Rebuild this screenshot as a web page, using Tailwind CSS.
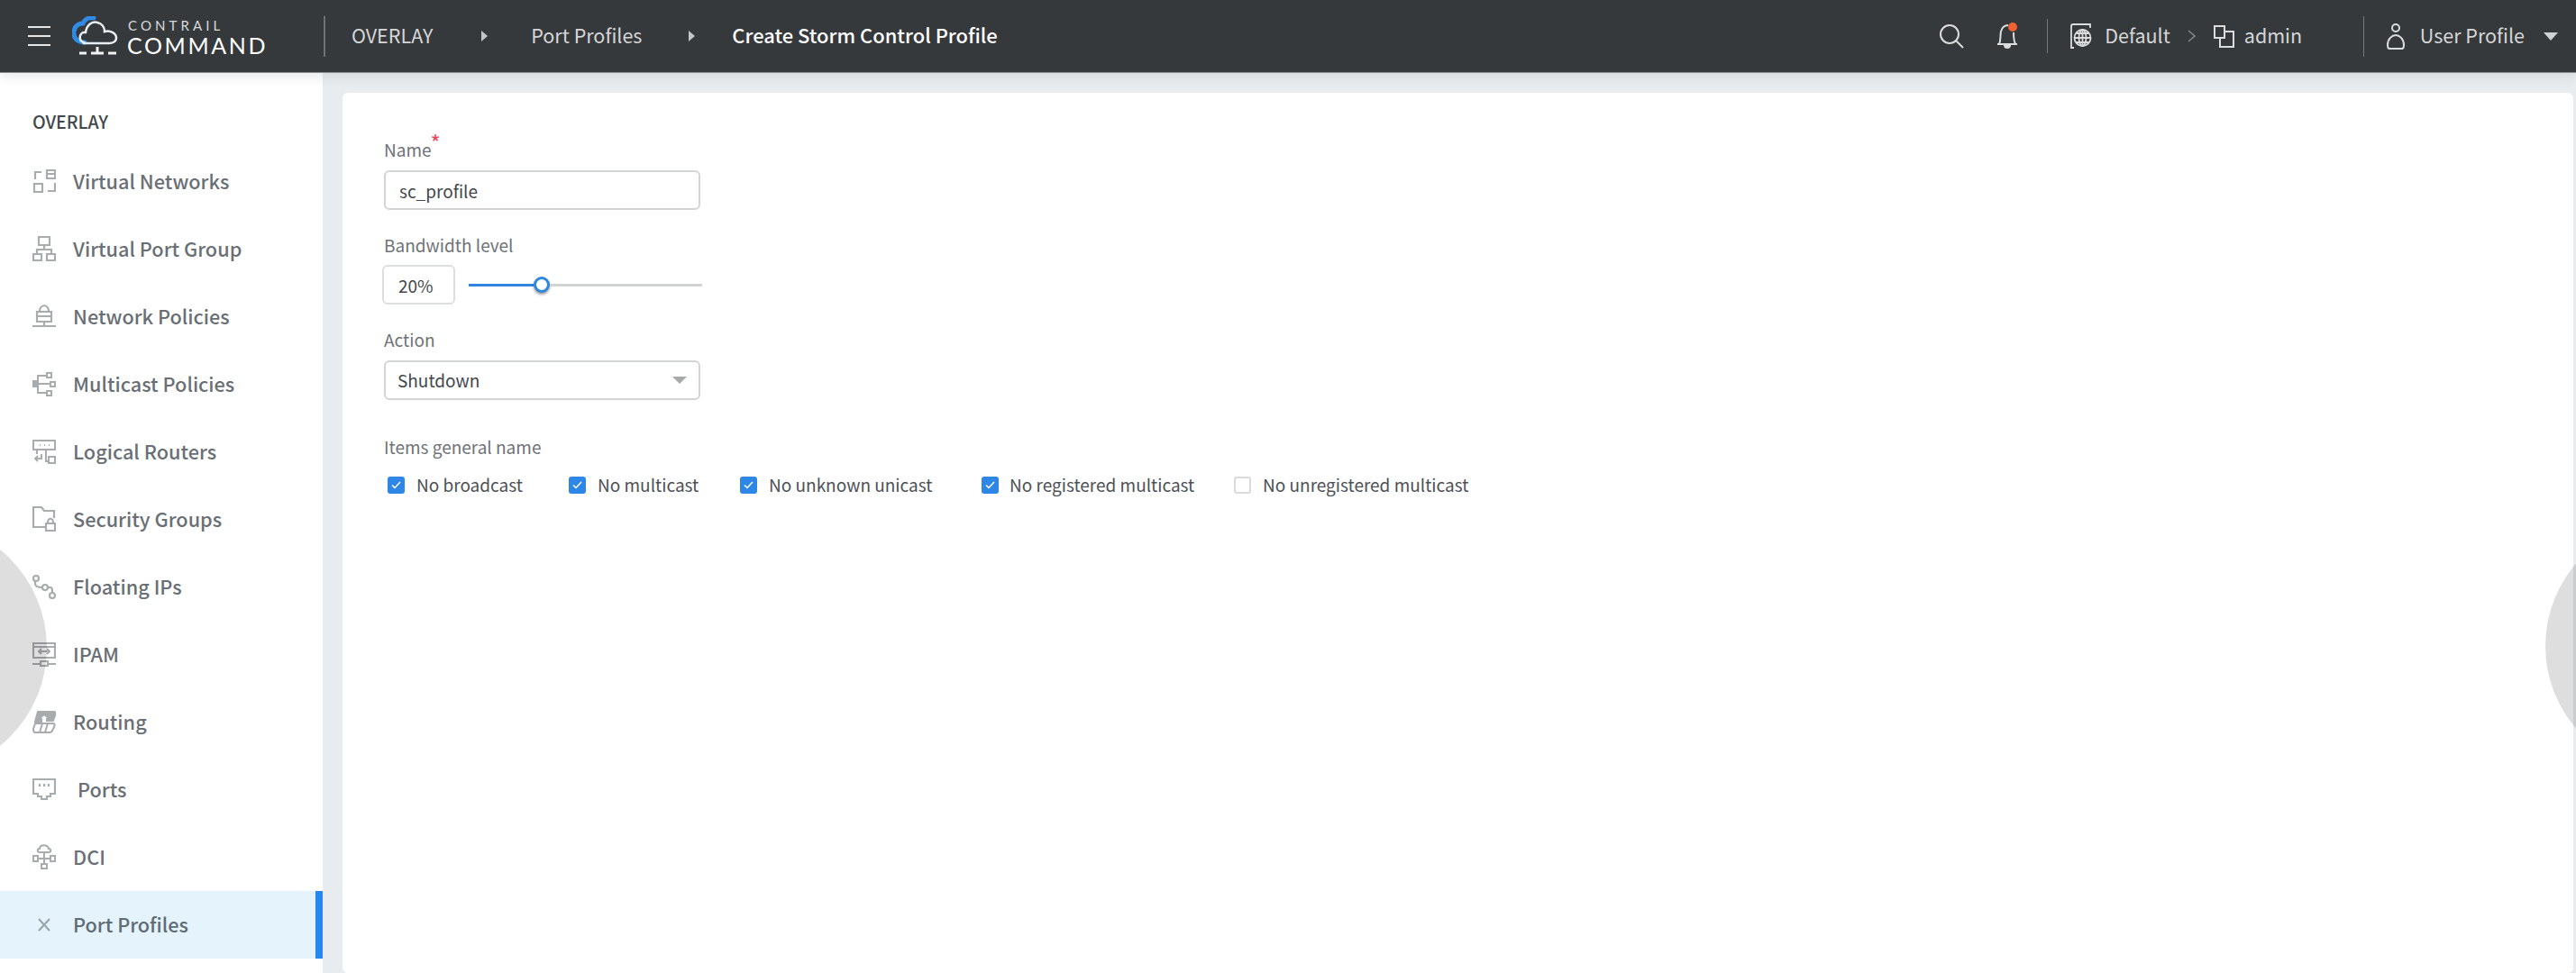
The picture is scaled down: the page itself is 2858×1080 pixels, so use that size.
<!DOCTYPE html>
<html lang="en">
<head>
  <meta charset="UTF-8">
  <title>Create Storm Control Profile</title>
  <script src="https://cdn.jsdelivr.net/npm/@tailwindcss/browser@4"></script>
</head>
<body class="bg-[#e9ecef] font-['Noto_Sans_CJK_JP','Noto_Sans',sans-serif]">
  <div class="relative w-full h-[1080px] overflow-hidden flex flex-col">

    <!-- top bar -->
    <header class="relative z-10 h-[81px] shrink-0 bg-[#36393c] border-b border-[#8b8e91] shadow-[0_3px_14px_rgba(0,0,0,0.10)] flex items-center text-[#d5d6d7] text-[21.500px]">
      <div class="ml-[31px] w-[25px] flex flex-col gap-[8px]">
        <span class="h-[2px] bg-[#e6e6e6]"></span>
        <span class="h-[2px] bg-[#e6e6e6]"></span>
        <span class="h-[2px] bg-[#e6e6e6]"></span>
      </div>
      <svg class="ml-[24px]" width="52" height="44" viewBox="0 0 52 44" fill="none">
        <path d="M14 29C6 29 1 24 2 17C3 10 8 8 12 8C14 3 19 1 24 2" stroke="#2f8be6" stroke-width="5" stroke-linecap="round"/>
        <path d="M14 30C9 29 8 22 13 19C14 19 15 19 16 19C17 11 23 6 29 8C34 9 37 13 37 18C43 16 50 20 50 25C50 29 46 31 42 31H14Z" stroke="#e9eef3" stroke-width="2.5" transform="translate(-1 -1)"/>
        <path d="M8 41H16M21 41H35M40 41H49M28 34V41" stroke="#f2f2f2" stroke-width="3"/>
      </svg>
      <div class="ml-[9px] w-[158px] flex flex-col font-['Lato',sans-serif] text-white">
        <span class="text-[15px] leading-[19px] tracking-[4.1px] pl-[1px] text-[#d8d9da]">CONTRAIL</span>
        <span class="text-[25px] leading-[24px] tracking-[2.600px] whitespace-nowrap">COMMAND</span>
      </div>
      <span class="ml-[60px] w-[2px] h-[45px] bg-[#6f7275]"></span>
      <span class="ml-[29px] pb-[2px]">OVERLAY</span>
      <span class="ml-[54px] border-y-[6px] border-l-[7px] border-y-transparent border-l-[#c4c5c6]"></span>
      <span class="ml-[48px] pb-[2px]">Port Profiles</span>
      <span class="ml-[52px] border-y-[6px] border-l-[7px] border-y-transparent border-l-[#c4c5c6]"></span>
      <span class="ml-[41px] pb-[2px] text-[21.900px] font-medium text-white">Create Storm Control Profile</span>

      <div class="ml-auto flex items-center">
        <svg width="28" height="28" viewBox="0 0 28 28" fill="none" stroke="#dcdcdc" stroke-width="2"><circle cx="12" cy="12" r="10"/><path d="M19 19L27 27"/></svg>
        <svg class="ml-[35px]" width="26" height="30" viewBox="0 0 26 30" fill="none" stroke="#dcdcdc" stroke-width="2"><path d="M4 24C6 20 5 14 6 10C7 6 10 3 14 3"/><path d="M20 11C20 16 20 20 22 24M2 24H24"/><path d="M10 25C10 29 16 29 16 25" fill="#dcdcdc"/></svg>
        <span class="ml-[31px] w-[1px] h-[38px] bg-[#75787b]"></span>
        <svg class="ml-[24px]" width="25" height="30" viewBox="0 0 25 30" fill="none" stroke="#dcdcdc" stroke-width="1.800"><path d="M5 28H2V4C2 2 3 2 4 2H23V6"/><circle cx="14.500" cy="17" r="9"/><path d="M5.500 17H23.500M14.500 8V26M8 12H21M8 22H21"/><ellipse cx="14.500" cy="17" rx="4" ry="9"/></svg>
        <span class="ml-[14px] pb-[2px]">Default</span>
        <svg class="ml-[19px]" width="9" height="14" viewBox="0 0 9 14" fill="none" stroke="#85888a" stroke-width="1.500"><path d="M1 1L8 7L1 13"/></svg>
        <svg class="ml-[19px]" width="25" height="26" viewBox="0 0 25 26" fill="none" stroke="#dcdcdc" stroke-width="2"><path d="M2 2H13V15H2Z"/><path d="M13 8H23V25H8V15"/></svg>
        <span class="ml-[10px] pb-[2px] w-[132px]">admin</span>
        <span class="w-[1px] h-[45px] bg-[#75787b]"></span>
        <svg class="ml-[25px]" width="20" height="31" viewBox="0 0 20 31" fill="none" stroke="#dcdcdc" stroke-width="2"><circle cx="10" cy="6" r="4"/><path d="M3 29C1 29 1 27 1 25C1 18 6 14 10 14C14 14 19 18 19 25C19 27 19 29 17 29Z"/></svg>
        <span class="ml-[17px] pb-[2px]">User Profile</span>
        <span class="ml-[21px] mr-[20px] border-x-[8px] border-t-[9px] border-x-transparent border-t-[#d0d1d2]"></span>
      </div>
      <!-- unread dot on the bell -->
      <span class="absolute left-[2228px] top-[25px] w-[10px] h-[10px] rounded-full bg-[#f0622f]"></span>
    </header>

    <div class="flex flex-1 min-h-0">
      <!-- sidebar -->
      <aside class="w-[358px] shrink-0 bg-white text-[21.700px] font-medium text-[#6a6f75]">
        <div class="h-[83px] pl-[36px] pt-[40px] text-[19.500px] leading-[28px] text-[#43474b]">OVERLAY</div>

        <a class="h-[75px] flex items-center pl-[36px] pb-[1px]">
          <svg class="shrink-0" width="26" height="26" viewBox="0 0 26 26" fill="none" stroke="#a9acaf" stroke-width="2.200"><path d="M3 11V3H10M16 1H25V10H16ZM25 15V24H17M2 16H11V25H2ZM16 5H25"/></svg>
          <span class="ml-[19px]">Virtual Networks</span>
        </a>
        <a class="h-[75px] flex items-center pl-[36px] pb-[1px]">
          <svg class="shrink-0" width="26" height="28" viewBox="0 0 26 28" fill="none" stroke="#a9acaf" stroke-width="2.200"><path d="M7 1H19V10H7ZM13 10V15M5 20V15H21V20M1 20H10V27H1ZM16 20H25V27H16Z"/></svg>
          <span class="ml-[19px]">Virtual Port Group</span>
        </a>
        <a class="h-[75px] flex items-center pl-[36px] pb-[1px]">
          <svg class="shrink-0" width="26" height="28" viewBox="0 0 26 28" fill="none" stroke="#a9acaf" stroke-width="2.200"><path d="M8 9C8 0 18 0 18 9M5 9H21V20H5ZM5 14H21M0 25H26M13 20V26"/></svg>
          <span class="ml-[19px]">Network Policies</span>
        </a>
        <a class="h-[75px] flex items-center pl-[36px] pb-[1px]">
          <svg class="shrink-0" width="26" height="27" viewBox="0 0 26 27" fill="none" stroke="#a9acaf" stroke-width="2"><path d="M3 13H19M6 13V4H16M6 13V23H16"/><path d="M16 1H21V6H16ZM20 11H25V16H20ZM16 21H21V26H16Z"/><rect x="1" y="10" width="5" height="6" fill="#a9acaf"/></svg>
          <span class="ml-[19px]">Multicast Policies</span>
        </a>
        <a class="h-[75px] flex items-center pl-[36px] pb-[1px]">
          <svg class="shrink-0" width="26" height="27" viewBox="0 0 26 27" fill="none" stroke="#a9acaf" stroke-width="2"><path d="M1 1H25V11H1ZM8 6H9M13 6H14M18 6H19"/><path d="M5 11V16M15 11V24H18M10 16V21H3M6 18L3 21L6 24"/><path d="M18 19H25V26H18Z"/></svg>
          <span class="ml-[19px]">Logical Routers</span>
        </a>
        <a class="h-[75px] flex items-center pl-[36px] pb-[1px]">
          <svg class="shrink-0" width="26" height="28" viewBox="0 0 26 28" fill="none" stroke="#a9acaf" stroke-width="2.200"><path d="M14 23H1V1H10L13 5H24V13"/><path d="M15 19H25V27H15ZM17 19C17 12 23 12 23 19"/></svg>
          <span class="ml-[19px]">Security Groups</span>
        </a>
        <a class="h-[75px] flex items-center pl-[36px] pb-[1px]">
          <svg class="shrink-0" width="26" height="27" viewBox="0 0 26 27" fill="none" stroke="#a9acaf" stroke-width="2.200"><circle cx="4" cy="4" r="3"/><circle cx="14" cy="14" r="3"/><circle cx="22" cy="23" r="3"/><path d="M3 7V10C3 13 6 14 11 14M17 14H20C22 14 22 16 22 20"/></svg>
          <span class="ml-[19px]">Floating IPs</span>
        </a>
        <a class="h-[75px] flex items-center pl-[36px] pb-[1px]">
          <svg class="shrink-0" width="26" height="27" viewBox="0 0 26 27" fill="none" stroke="#a9acaf" stroke-width="2.200"><path d="M1 1H25V17H1ZM1 5H25M7 10H19M10 7L7 10L10 13M16 7L19 10L16 13M9 21H17V26H9ZM0 24H9M17 24H26"/></svg>
          <span class="ml-[19px]">IPAM</span>
        </a>
        <a class="h-[75px] flex items-center pl-[36px] pb-[1px]">
          <svg class="shrink-0" width="26" height="25" viewBox="0 0 26 25" fill="none" stroke="#a9acaf" stroke-width="2"><path d="M6 1H24C26 1 26 3 25 5L23 11H16V9H19L13 4L7 9H10V12H3Z" fill="#a9acaf"/><path d="M3 14H23C25 14 25 16 24 18L22 22C21 24 20 24 19 24H3C1 24 1 22 1 20ZM11 14L8 24M17 14L14 24"/></svg>
          <span class="ml-[19px]">Routing</span>
        </a>
        <a class="h-[75px] flex items-center pl-[36px] pb-[1px]">
          <svg class="shrink-0" width="26" height="24" viewBox="0 0 26 24" fill="none" stroke="#a9acaf" stroke-width="2.200"><path d="M1 1H25V17H20V20H16V23H10V20H6V17H1ZM8 6V9M13 6V9M18 6V9"/></svg>
          <span class="ml-[24px]">Ports</span>
        </a>
        <a class="h-[75px] flex items-center pl-[36px] pb-[1px]">
          <svg class="shrink-0" width="26" height="28" viewBox="0 0 26 28" fill="none" stroke="#a9acaf" stroke-width="2"><path d="M8 9C5 9 5 5 8 5C8 0 17 0 18 5C21 5 21 9 18 9ZM13 9V22M6 16H20"/><path d="M1 13H6V19H1ZM20 13H25V19H20ZM10 22H16V27H10Z"/></svg>
          <span class="ml-[19px]">DCI</span>
        </a>
        <a class="h-[75px] flex items-center pl-[41px] pb-[1px] bg-[#e5f3fc] border-r-[8px] border-[#2688ee]">
          <svg class="shrink-0" width="16" height="15" viewBox="0 0 16 15" fill="none" stroke="#9aa3aa" stroke-width="2"><path d="M2 1L14 14M14 1L2 14"/></svg>
          <span class="ml-[24px] text-[#5f6b75]">Port Profiles</span>
        </a>
      </aside>

      <!-- form card -->
      <main class="flex-1 min-w-0 pl-[22px] pr-[3px] pt-[22px]">
        <div class="h-full bg-white rounded-md pl-[46px] text-[19px] text-[#6f7377]">
          <div class="pt-[46px] leading-[34px] h-[86px]">Name<span class="relative top-[-6px] ml-[-1px] text-[24px] leading-none text-[#f5425f]">*</span></div>
          <div class="w-[351px] h-[44px] border-2 border-[#d3d4d6] rounded-md pl-[15px] pt-[2px] flex items-center text-[#43474b]">sc_profile</div>

          <div class="mt-[22px] h-[34px] leading-[34px]">Bandwidth level</div>
          <div class="flex items-center h-[44px] mt-[5px] ml-[-2px]">
            <div class="w-[81px] h-[44px] border-2 border-[#dcdddf] rounded-md pl-[16px] pt-[2px] flex items-center text-[#43474b]">20%</div>
            <div class="ml-[15px] w-[259px] flex items-center">
              <span class="w-[72px] h-[3px] bg-[#2e86de]"></span>
              <span class="w-[18px] h-[18px] shrink-0 rounded-full bg-white border-[3px] border-[#2e86de] shadow-[0_2px_3px_rgba(0,0,0,0.4)]"></span>
              <span class="flex-1 h-[3px] bg-[#d2d3d4]"></span>
            </div>
          </div>

          <div class="mt-[22px] h-[34px] leading-[34px]">Action</div>
          <div class="w-[351px] h-[44px] mt-[6px] border-2 border-[#d3d4d6] rounded-md pl-[13px] pr-[13px] flex items-center justify-between text-[#43474b]">
            <span>Shutdown</span>
            <span class="border-x-[8px] border-t-[8px] border-x-transparent border-t-[#a6a8aa]"></span>
          </div>

          <div class="mt-[35px] h-[34px] leading-[34px]">Items general name</div>
          <div class="mt-[16px] flex items-center h-[19px] pl-[4px] text-[#4d5156]">
            <div class="w-[201px] flex items-center">
              <span class="w-[19px] h-[19px] rounded-[3px] bg-[#2e86e6] flex items-center justify-center"><svg width="11" height="9" viewBox="0 0 11 9" fill="none" stroke="#fff" stroke-width="1.500"><path d="M1 4.500L4 7.500L10 1"/></svg></span>
              <span class="ml-[13px]">No broadcast</span>
            </div>
            <div class="w-[190px] flex items-center">
              <span class="w-[19px] h-[19px] rounded-[3px] bg-[#2e86e6] flex items-center justify-center"><svg width="11" height="9" viewBox="0 0 11 9" fill="none" stroke="#fff" stroke-width="1.500"><path d="M1 4.500L4 7.500L10 1"/></svg></span>
              <span class="ml-[13px]">No multicast</span>
            </div>
            <div class="w-[268px] flex items-center">
              <span class="w-[19px] h-[19px] rounded-[3px] bg-[#2e86e6] flex items-center justify-center"><svg width="11" height="9" viewBox="0 0 11 9" fill="none" stroke="#fff" stroke-width="1.500"><path d="M1 4.500L4 7.500L10 1"/></svg></span>
              <span class="ml-[13px]">No unknown unicast</span>
            </div>
            <div class="w-[280px] flex items-center">
              <span class="w-[19px] h-[19px] rounded-[3px] bg-[#2e86e6] flex items-center justify-center"><svg width="11" height="9" viewBox="0 0 11 9" fill="none" stroke="#fff" stroke-width="1.500"><path d="M1 4.500L4 7.500L10 1"/></svg></span>
              <span class="ml-[12px]">No registered multicast</span>
            </div>
            <div class="flex items-center">
              <span class="w-[19px] h-[19px] rounded-[3px] border-2 border-[#d9dadb] bg-white"></span>
              <span class="ml-[13px]">No unregistered multicast</span>
            </div>
          </div>
        </div>
      </main>
    </div>

    <!-- half circles at both window edges -->
    <span class="absolute left-[-228px] top-[579px] w-[280px] h-[280px] rounded-full bg-black/[0.13] pointer-events-none"></span>
    <span class="absolute left-[2824px] top-[577px] w-[280px] h-[280px] rounded-full bg-black/[0.13] pointer-events-none"></span>
  </div>
</body>
</html>
